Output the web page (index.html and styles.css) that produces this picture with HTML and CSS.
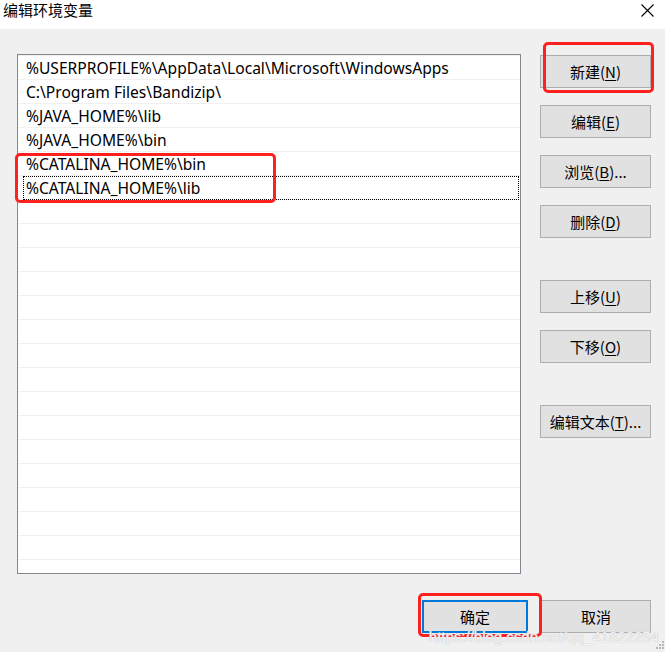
FILE: index.html
```html
<!DOCTYPE html>
<html lang="zh-CN">
<head>
    <meta charset="UTF-8">
    <meta name="viewport" content="width=device-width, initial-scale=1.0">
    <title>编辑环境变量</title>
    <link rel="stylesheet" href="styles.css">
</head>
<body>
    <div class="window">
        <div class="titlebar">
            <span class="title">编辑环境变量</span>
            <svg class="close" width="13" height="13" viewBox="0 0 13 13"><path d="M0.5 0.5 L12.5 12.5 M12.5 0.5 L0.5 12.5" stroke="#000" stroke-width="1.1" fill="none"/></svg>
        </div>

        <div class="content">
            <div class="path-list">
                <div class="row">%USERPROFILE%\AppData\Local\Microsoft\WindowsApps</div>
                <div class="row">C:\Program Files\Bandizip\</div>
                <div class="row">%JAVA_HOME%\lib</div>
                <div class="row">%JAVA_HOME%\bin</div>
                <div class="row">%CATALINA_HOME%\bin</div>
                <div class="row selected">%CATALINA_HOME%\lib</div>
            </div>

            <div class="side-buttons">
                <button class="btn">新建(<u>N</u>)</button>
                <button class="btn">编辑(<u>E</u>)</button>
                <button class="btn">浏览(<u>B</u>)...</button>
                <button class="btn">删除(<u>D</u>)</button>
                <button class="btn group-start">上移(<u>U</u>)</button>
                <button class="btn">下移(<u>O</u>)</button>
                <button class="btn group-start">编辑文本(<u>T</u>)...</button>
            </div>
        </div>

        <div class="footer">
            <button class="btn btn-ok">确定</button>
            <button class="btn btn-cancel">取消</button>
        </div>

        <!-- red annotation marks drawn over the screenshot -->
        <div class="mark mark-new"></div>
        <div class="mark mark-rows"></div>
        <div class="mark mark-ok"></div>

        <div class="watermark">https://blog.csdn.net/qq_41822254</div>

        <svg class="grip" width="10" height="10" viewBox="0 0 10 10">
            <rect x="8" y="0" width="2" height="2" fill="#b8b8b8"/>
            <rect x="5" y="3" width="2" height="2" fill="#b8b8b8"/>
            <rect x="8" y="3" width="2" height="2" fill="#b8b8b8"/>
            <rect x="2" y="6" width="2" height="2" fill="#b8b8b8"/>
            <rect x="5" y="6" width="2" height="2" fill="#b8b8b8"/>
            <rect x="8" y="6" width="2" height="2" fill="#b8b8b8"/>
        </svg>
    </div>
</body>
</html>
```

FILE: styles.css
```css
body { margin: 0; background: #f0f0f0; font-family: "Noto Sans", "Noto Sans CJK SC", sans-serif; }

.window { position: relative; width: 665px; height: 652px; overflow: hidden; background: #f0f0f0; }

.titlebar { height: 29px; background: #fff; display: flex; align-items: flex-start; justify-content: space-between; padding: 0 11px 0 3px; box-sizing: border-box; }
.title { font-family: "Noto Sans CJK SC", sans-serif; font-size: 15px; line-height: 20px; color: #000; }
.close { margin-top: 4px; }

.content { display: flex; padding: 25px 0 0 17px; }

.path-list {
    width: 504px;
    height: 520px;
    box-sizing: border-box;
    border: 1px solid #828790;
    background: #fff;
    padding-top: 1px;
    /* the empty rows below the entries still show their divider lines */
    background-image: repeating-linear-gradient(to bottom, transparent 0, transparent 23px, #f0f0f0 23px, #f0f0f0 24px);
    background-position: 0 1px;
    background-clip: content-box;
}
.row {
    height: 24px;
    box-sizing: border-box;
    padding: 0 0 0 8px;
    font-family: "Noto Sans", sans-serif;
    font-size: 15.6px;
    line-height: 24px;
    color: #000;
    white-space: nowrap;
    border-bottom: 1px solid #f0f0f0;
}
.row.selected { margin-left: 5px; padding-left: 3px; margin-right: 1px; outline: 1px dotted #000; outline-offset: -1px; }

.side-buttons { display: flex; flex-direction: column; gap: 17px; margin-left: 19px; padding-top: 1px; }
.side-buttons .group-start { margin-top: 25px; }

.btn {
    width: 111px;
    height: 33px;
    background: #e1e1e1;
    border: 1px solid #adadad;
    font-family: "Noto Sans CJK SC", sans-serif;
    font-size: 15px;
    color: #000;
    padding: 0;
    border-radius: 0;
}
.btn u { text-underline-offset: 2px; }

.footer { display: flex; justify-content: flex-end; gap: 13px; padding: 26px 14px 0 0; }
.btn-ok { width: 106px; border: 2px solid #0078d7; }
.btn-cancel { width: 110px; }

.mark { position: absolute; border: 3px solid #ff2020; border-radius: 5px; box-sizing: border-box; }
.mark-new { left: 543px; top: 42px; width: 111px; height: 51px; }
.mark-rows { left: 15px; top: 153px; width: 261px; height: 50px; }
.mark-ok { left: 418px; top: 593px; width: 124px; height: 44px; }

.watermark { position: absolute; right: 6px; top: 628px; font-family: "Liberation Sans", sans-serif; font-size: 15px; color: rgba(255, 255, 255, 0.8); text-shadow: 0 0 1px #c4c4c4, 0 0 1px #c4c4c4; white-space: nowrap; }

.grip { position: absolute; right: 1px; bottom: 1px; }
```
